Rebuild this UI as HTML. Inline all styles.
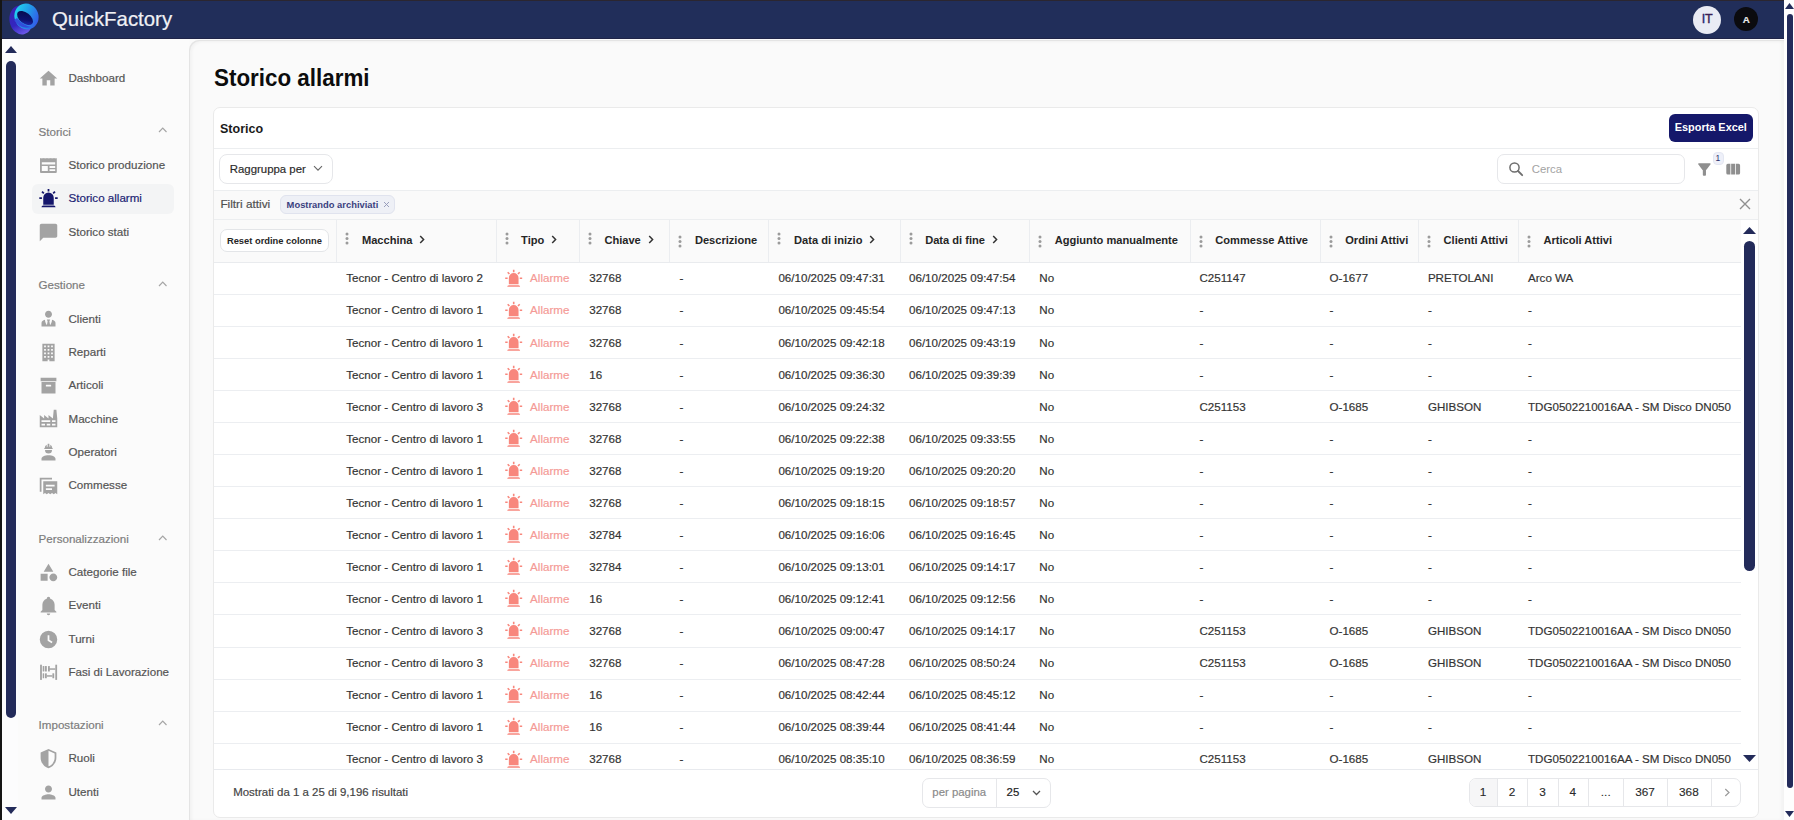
<!DOCTYPE html>
<html><head><meta charset="utf-8"><title>Storico allarmi</title>
<style>
html,body{margin:0;padding:0;width:1794px;height:820px;overflow:hidden;background:#fafafa;}
body{position:relative;font-family:"Liberation Sans",sans-serif;}
.t{position:absolute;white-space:nowrap;}
.r{position:absolute;}
.m{-webkit-text-stroke:0.2px;}
.m1{-webkit-text-stroke:0.18px;}
svg.r{display:block;}
</style></head><body>

<div class="r" style="left:0px;top:0px;width:1794px;height:820px;background:#fafafa"></div>
<div class="r" style="left:1784px;top:0px;width:10px;height:820px;background:#fefefe"></div>
<div class="r" style="left:1787px;top:14px;width:6px;height:774px;background:#232b5a;border-radius:3px"></div>
<svg class="r" style="left:1785px;top:3px;" width="9" height="6" viewBox="0 0 9 6"><path d="M0 6 L4.5 0 L9 6 Z" fill="#232b5a"/></svg>
<svg class="r" style="left:1785px;top:811px;" width="9" height="6" viewBox="0 0 9 6"><path d="M0 0 L4.5 6 L9 0 Z" fill="#232b5a"/></svg>
<div class="r" style="left:0px;top:0px;width:1784px;height:39px;background:#212e5a"></div>
<div class="r" style="left:0px;top:0px;width:1784px;height:1px;background:#2b2630"></div>
<div class="r" style="left:0px;top:38px;width:1784px;height:1px;background:#1f2448"></div>
<div class="r" style="left:0px;top:0px;width:2px;height:820px;background:#151515"></div>
<svg class="r" style="left:0px;top:0px" width="44" height="38" viewBox="0 0 44 38">
<defs>
<linearGradient id="lgp" x1="0.3" y1="0" x2="0.5" y2="1"><stop offset="0" stop-color="#3a22b0"/><stop offset="0.6" stop-color="#3325c0"/><stop offset="1" stop-color="#6b58ea"/></linearGradient>
<linearGradient id="lgc" x1="0.1" y1="0.1" x2="0.9" y2="0.9"><stop offset="0" stop-color="#21d8f0"/><stop offset="0.5" stop-color="#229ae8"/><stop offset="1" stop-color="#3552e8"/></linearGradient>
<linearGradient id="lgd" x1="0" y1="0" x2="1" y2="1"><stop offset="0" stop-color="#050a45"/><stop offset="0.6" stop-color="#0c1270"/><stop offset="1" stop-color="#2a2ec8"/></linearGradient>
</defs>
<ellipse cx="21" cy="20" rx="11.5" ry="14.5" transform="rotate(-12 21 20)" fill="url(#lgp)"/>
<ellipse cx="26.5" cy="16.5" rx="12" ry="13" transform="rotate(-20 26.5 16.5)" fill="url(#lgc)"/>
<ellipse cx="25" cy="18" rx="9.2" ry="5.4" transform="rotate(38 25 18)" fill="url(#lgd)"/>
<path d="M14 20 Q20 30 31 27 Q24 26 17 18 Z" fill="#3440d8" opacity="0.85"/>
</svg>
<div class="t " style="left:52.00px;top:8.83px;font-size:20.4px;line-height:20.4px;color:#f0f1f5;-webkit-text-stroke:0.2px #f0f1f5">QuickFactory</div>
<div class="r" style="left:1693px;top:6px;width:28px;height:28px;background:#e9ebf4;border-radius:50%"></div>
<div class="t" style="left:1693px;top:11.4px;width:28px;text-align:center;font-size:12.5px;line-height:16px;letter-spacing:-0.3px;-webkit-text-stroke:0.4px"><span style="color:#1f2470">I</span><span style="color:#3a1f55">T</span></div>
<div class="r" style="left:1734px;top:7px;width:24px;height:24px;background:#0b0b0f;border-radius:50%"></div>
<div class="t" style="left:1734px;top:13px;width:24.5px;text-align:center;font-size:9.8px;line-height:14px;font-weight:700;color:#ececec;-webkit-text-stroke:0.2px">A</div>
<div class="r" style="left:2px;top:39px;width:187px;height:781px;background:#fbfbfb"></div>
<div class="r" style="left:2px;top:39px;width:16px;height:781px;background:#fcfcfd"></div>
<svg class="r" style="left:5px;top:46px;" width="12" height="7" viewBox="0 0 12 7"><path d="M0 7 L6 0 L12 7 Z" fill="#232b5a"/></svg>
<div class="r" style="left:6px;top:61px;width:10px;height:657px;background:#232b5a;border-radius:5px"></div>
<svg class="r" style="left:5px;top:807px;" width="12" height="7" viewBox="0 0 12 7"><path d="M0 0 L6 7 L12 0 Z" fill="#232b5a"/></svg>
<svg class="r" style="left:38.1px;top:68.2px;" width="21" height="21" viewBox="0 0 24 24"><g fill="#a3a3a3"><path d="M10 20v-6h4v6h5v-8h3L12 3 2 12h3v8z"/></g></svg>
<div class="t m" style="left:68.50px;top:72.38px;font-size:11.6px;line-height:11.6px;color:#555555;">Dashboard</div>
<div class="t m" style="left:38.60px;top:125.78px;font-size:11.6px;line-height:11.6px;color:#7d7d7d;">Storici</div>
<svg class="r" style="left:157.5px;top:127.39999999999999px;" width="9.5" height="6" viewBox="0 0 9.5 6"><path d="M1 5 L4.75 1.2 L8.5 5" fill="none" stroke="#a5a5a5" stroke-width="1.2"/></svg>
<div class="r" style="left:32px;top:184px;width:142px;height:30px;background:#f3f4f5;border-radius:6px"></div>
<div class="t m" style="left:38.60px;top:279.08px;font-size:11.6px;line-height:11.6px;color:#7d7d7d;">Gestione</div>
<svg class="r" style="left:157.5px;top:280.7px;" width="9.5" height="6" viewBox="0 0 9.5 6"><path d="M1 5 L4.75 1.2 L8.5 5" fill="none" stroke="#a5a5a5" stroke-width="1.2"/></svg>
<div class="t m" style="left:38.60px;top:532.98px;font-size:11.6px;line-height:11.6px;color:#7d7d7d;">Personalizzazioni</div>
<svg class="r" style="left:157.5px;top:534.5999999999999px;" width="9.5" height="6" viewBox="0 0 9.5 6"><path d="M1 5 L4.75 1.2 L8.5 5" fill="none" stroke="#a5a5a5" stroke-width="1.2"/></svg>
<div class="t m" style="left:38.60px;top:718.68px;font-size:11.6px;line-height:11.6px;color:#7d7d7d;">Impostazioni</div>
<svg class="r" style="left:157.5px;top:720.3px;" width="9.5" height="6" viewBox="0 0 9.5 6"><path d="M1 5 L4.75 1.2 L8.5 5" fill="none" stroke="#a5a5a5" stroke-width="1.2"/></svg>
<svg class="r" style="left:40px;top:157.8px;" width="17.2" height="15" viewBox="0 0 17.2 15"><path fill="#a3a3a3" fill-rule="evenodd" d="M0 0.6l0.7-0.6 0.7 0.6 0.7-0.6 0.7 0.6 0.7-0.6 0.7 0.6 0.7-0.6 0.7 0.6 0.7-0.6 0.7 0.6 0.7-0.6 0.7 0.6 0.7-0.6 0.7 0.6 0.7-0.6 0.7 0.6 0.7-0.6 0.7 0.6 0.7-0.6 0.7 0.6 0.7-0.6 0.7 0.6 0.7-0.6 0.7 0.6V14a1 1 0 0 1-1 1H1a1 1 0 0 1-1-1zM1.8 4.2v2.2h13.4V4.2zm0 3.8v5h6v-5zm7.7 0v2h5.7v-2zm0 3.3v1.7h5.7v-1.7z"/></svg>
<div class="t m" style="left:68.50px;top:158.98px;font-size:11.6px;line-height:11.6px;color:#555555;">Storico produzione</div>
<svg class="r" style="left:38.1px;top:188.3px;" width="21" height="21" viewBox="0 0 24 24"><g fill="#15166b"><path d="M6,6.9L3.87,4.78L5.28,3.37L7.4,5.5L6,6.9M13,1V4H11V1H13M20.13,4.78L18,6.9L16.6,5.5L18.72,3.37L20.13,4.78M4.5,10.5V12.5H1.5V10.5H4.5M19.5,10.5H22.5V12.5H19.5V10.5M6,20H18A2,2 0 0,1 20,22H4A2,2 0 0,1 6,20M12,5A6,6 0 0,1 18,11V19H6V11A6,6 0 0,1 12,5Z"/></g></svg>
<div class="t m" style="left:68.50px;top:192.48px;font-size:11.6px;line-height:11.6px;color:#1c1f74;">Storico allarmi</div>
<svg class="r" style="left:38.1px;top:221.5px;" width="21" height="21" viewBox="0 0 24 24"><g fill="#a3a3a3"><path d="M20 2H4c-1.1 0-1.99.9-1.99 2L2 22l4-4h14c1.1 0 2-.9 2-2V4c0-1.1-.9-2-2-2z"/></g></svg>
<div class="t m" style="left:68.50px;top:225.68px;font-size:11.6px;line-height:11.6px;color:#555555;">Storico stati</div>
<svg class="r" style="left:38.1px;top:308.4px;" width="21" height="21" viewBox="0 0 24 24"><g fill="#a3a3a3"><path d="M12 3C14.21 3 16 4.79 16 7S14.21 11 12 11 8 9.21 8 7 9.79 3 12 3M16 13.54C16 14.6 15.72 17.07 13.81 19.83L13 15L13.94 13.12C13.32 13.05 12.67 13 12 13S10.68 13.05 10.06 13.12L11 15L10.19 19.83C8.28 17.07 8 14.6 8 13.54C5.61 14.24 4 15.5 4 17V21H20V17C20 15.5 18.4 14.24 16 13.54Z"/></g></svg>
<div class="t m" style="left:68.50px;top:312.58px;font-size:11.6px;line-height:11.6px;color:#555555;">Clienti</div>
<svg class="r" style="left:38.1px;top:341.9px;" width="21" height="21" viewBox="0 0 24 24"><g fill="#a3a3a3"><path fill-rule="evenodd" d="M5 2h14v20H5zM7 4v2h2V4zm4 0v2h2V4zm4 0v2h2V4zM7 8v2h2V8zm4 0v2h2V8zm4 0v2h2V8zM7 12v2h2v-2zm4 0v2h2v-2zm4 0v2h2v-2zM7 16v2h2v-2zm4 0v2h2v-2zm4 0v2h2v-2zM11 20v2h2v-2z"/></g></svg>
<div class="t m" style="left:68.50px;top:346.08px;font-size:11.6px;line-height:11.6px;color:#555555;">Reparti</div>
<svg class="r" style="left:38.1px;top:375.0px;" width="21" height="21" viewBox="0 0 24 24"><g fill="#a3a3a3"><path d="M3,3H21V7H3V3M4,8H20V21H4V8M9.5,11A0.5,0.5 0 0,0 9,11.5V13H15V11.5A0.5,0.5 0 0,0 14.5,11H9.5Z"/></g></svg>
<div class="t m" style="left:68.50px;top:379.18px;font-size:11.6px;line-height:11.6px;color:#555555;">Articoli</div>
<svg class="r" style="left:38.1px;top:408.4px;" width="21" height="21" viewBox="0 0 24 24"><g fill="#a3a3a3"><path d="M4,18V20H8V18H4M4,14V16H14V14H4M10,18V20H14V18H10M16,14V16H20V14H16M16,18V20H20V18H16M2,22V8L7,12V8L12,12V8L17,12L18,2H21L22,12V22H2Z"/></g></svg>
<div class="t m" style="left:68.50px;top:412.58px;font-size:11.6px;line-height:11.6px;color:#555555;">Macchine</div>
<svg class="r" style="left:38.1px;top:441.8px;" width="21" height="21" viewBox="0 0 24 24"><g fill="#a3a3a3"><path d="M12,15C7.58,15 4,16.79 4,19V21H20V19C20,16.79 16.42,15 12,15M8,9A4,4 0 0,0 12,13A4,4 0 0,0 16,9M11.5,2C11.2,2 11,2.21 11,2.5V5.5H10V3C10,3 7.75,3.86 7.75,6.75C7.75,6.75 7,6.89 7,8H17C16.95,6.89 16.25,6.75 16.25,6.75C16.25,3.86 14,3 14,3V5.5H13V2.5C13,2.21 12.81,2 12.5,2H11.5Z"/></g></svg>
<div class="t m" style="left:68.50px;top:445.98px;font-size:11.6px;line-height:11.6px;color:#555555;">Operatori</div>
<svg class="r" style="left:38.1px;top:475.3px;" width="21" height="21" viewBox="0 0 24 24"><g fill="#a3a3a3"><path fill-rule="evenodd" d="M2 3h14v2H4v14H2zM6 7h16v15l-2-1.5-2 1.5-2-1.5-2 1.5-2-1.5-2 1.5-2-1.5-2 1.5zm3 4v2h10v-2zm0 4v2h7v-2z"/></g></svg>
<div class="t m" style="left:68.50px;top:479.48px;font-size:11.6px;line-height:11.6px;color:#555555;">Commesse</div>
<svg class="r" style="left:38.1px;top:562.0px;" width="21" height="21" viewBox="0 0 24 24"><g fill="#a3a3a3"><path d="M11,13.5V21.5H3V13.5H11M12,2L17.5,11H6.5L12,2M17.5,13C20,13 22,15 22,17.5C22,20 20,22 17.5,22C15,22 13,20 13,17.5C13,15 15,13 17.5,13Z"/></g></svg>
<div class="t m" style="left:68.50px;top:566.18px;font-size:11.6px;line-height:11.6px;color:#555555;">Categorie file</div>
<svg class="r" style="left:38.1px;top:595.3px;" width="21" height="21" viewBox="0 0 24 24"><g fill="#a3a3a3"><path d="M21,19V20H3V19L5,17V11C5,7.9 7.03,5.17 10,4.29C10,4.19 10,4.1 10,4A2,2 0 0,1 12,2A2,2 0 0,1 14,4C14,4.1 14,4.19 14,4.29C16.97,5.17 19,7.9 19,11V17L21,19M14,21A2,2 0 0,1 12,23A2,2 0 0,1 10,21"/></g></svg>
<div class="t m" style="left:68.50px;top:599.48px;font-size:11.6px;line-height:11.6px;color:#555555;">Eventi</div>
<svg class="r" style="left:38.1px;top:628.8px;" width="21" height="21" viewBox="0 0 24 24"><g fill="#a3a3a3"><path fill-rule="evenodd" d="M12 2a10 10 0 1 0 0 20 10 10 0 0 0 0-20zm-1 5h2v5.4l3.6 2.1-1 1.7L11 13.5z"/></g></svg>
<div class="t m" style="left:68.50px;top:632.98px;font-size:11.6px;line-height:11.6px;color:#555555;">Turni</div>
<svg class="r" style="left:36px;top:660.0px;" width="26" height="24" viewBox="0 0 26 24"><g fill="#a3a3a3"><rect x="4.1" y="4.7" width="1.8" height="15.2"/><rect x="19.3" y="4.7" width="1.8" height="15.2"/><rect x="6.7" y="5.9" width="1.5" height="5.5" rx="0.5"/><rect x="8.8" y="5.9" width="2.0" height="5.5" rx="0.5"/><rect x="12" y="5.9" width="1.8" height="5.5" rx="0.5"/><rect x="12" y="8.3" width="7.3" height="1.5"/><rect x="6.7" y="13.2" width="1.5" height="5" rx="0.5"/><rect x="9.0" y="13.2" width="1.8" height="5" rx="0.5"/><rect x="16.4" y="13.2" width="1.8" height="5" rx="0.5"/><rect x="10.8" y="15.2" width="5.6" height="1.5"/></g></svg>
<div class="t m" style="left:68.50px;top:666.48px;font-size:11.6px;line-height:11.6px;color:#555555;">Fasi di Lavorazione</div>
<svg class="r" style="left:38.1px;top:748.2px;" width="21" height="21" viewBox="0 0 24 24"><g fill="#a3a3a3"><path d="M12,1L3,5V11C3,16.55 6.84,21.74 12,23C17.16,21.74 21,16.55 21,11V5L12,1M12,3.18L19,6.3V11.22C19,15.6 16,19.8 12,20.9V3.18Z"/></g></svg>
<div class="t m" style="left:68.50px;top:752.38px;font-size:11.6px;line-height:11.6px;color:#555555;">Ruoli</div>
<svg class="r" style="left:38.1px;top:781.9px;" width="21" height="21" viewBox="0 0 24 24"><g fill="#a3a3a3"><path d="M12 12c2.21 0 4-1.79 4-4s-1.79-4-4-4-4 1.79-4 4 1.79 4 4 4zm0 2c-2.67 0-8 1.34-8 4v2h16v-2c0-2.66-5.33-4-8-4z"/></g></svg>
<div class="t m" style="left:68.50px;top:786.08px;font-size:11.6px;line-height:11.6px;color:#555555;">Utenti</div>
<div class="r" style="left:189px;top:40px;width:1595px;height:780px;background:#fafafa;border-top-left-radius:10px;box-shadow:inset 1px 1px 0 #e4e4e4, inset 3px 2px 3px rgba(0,0,0,0.035), inset -3px 0 3px rgba(0,0,0,0.03)"></div>
<div class="t " style="left:214.00px;top:68.24px;font-size:22.4px;line-height:22.4px;color:#0c0c0c;font-weight:700;transform:scaleY(1.09);transform-origin:0 19px">Storico allarmi</div>
<div class="r" style="left:213px;top:107px;width:1546px;height:711px;background:#ffffff;border:1px solid #eaeaea;border-radius:7px;box-sizing:border-box"></div>
<div class="t " style="left:220.00px;top:123.42px;font-size:12.5px;line-height:12.5px;color:#1a1a1a;font-weight:700;">Storico</div>
<div class="r" style="left:1669px;top:114px;width:84px;height:28px;background:#15186a;border-radius:6px"></div>
<div class="t " style="left:1674.80px;top:121.97px;font-size:10.9px;line-height:10.9px;color:#ffffff;font-weight:700;">Esporta Excel</div>
<div class="r" style="left:214px;top:148px;width:1544px;height:1px;background:#eceef0"></div>
<div class="r" style="left:219px;top:154px;width:114px;height:30px;background:#fff;border:1px solid #e6e7ea;border-radius:8px;box-sizing:border-box"></div>
<div class="t m1" style="left:229.80px;top:164.15px;font-size:11.4px;line-height:11.4px;color:#2b2b2b;">Raggruppa per</div>
<svg class="r" style="left:313px;top:165px;" width="10" height="7" viewBox="0 0 10 7"><path d="M1 1.2 L5 5.2 L9 1.2" fill="none" stroke="#666" stroke-width="1.1"/></svg>
<div class="r" style="left:1497px;top:154px;width:188px;height:30px;background:#fff;border:1px solid #e6e7ea;border-radius:7px;box-sizing:border-box"></div>
<svg class="r" style="left:1508px;top:161px;" width="16" height="16" viewBox="0 0 16 16"><circle cx="6.5" cy="6.5" r="4.6" fill="none" stroke="#6e6e6e" stroke-width="1.5"/><path d="M10 10 L14.2 14.2" stroke="#6e6e6e" stroke-width="1.8" stroke-linecap="round"/></svg>
<div class="t " style="left:1531.70px;top:163.75px;font-size:11.4px;line-height:11.4px;color:#a3a3a3;">Cerca</div>
<svg class="r" style="left:1695.4px;top:159.6px;" width="18.8" height="18.8" viewBox="0 0 24 24"><path fill="#8f8f8f" d="M4.25 5.61C6.27 8.2 10 13 10 13v6c0 .55.45 1 1 1h2c.55 0 1-.45 1-1v-6s3.72-4.8 5.74-7.39c.51-.66.04-1.61-.79-1.61H5.04c-.83 0-1.3.95-.79 1.61z"/></svg>
<div class="r" style="left:1712.5px;top:151.7px;width:11px;height:13px;background:#eef0f9;border:1px solid #e4e7f2;border-radius:4px;box-sizing:border-box"></div>
<div class="t " style="left:1715.60px;top:154.40px;font-size:8.5px;line-height:8.5px;color:#2a2f6a;">1</div>
<svg class="r" style="left:1723.7px;top:160.1px;" width="18.4" height="18.4" viewBox="0 0 24 24"><path fill="#8f8f8f" d="M14.67 5v14H9.33V5h5.34zm1 14H19a2 2 0 0 0 2-2V7a2 2 0 0 0-2-2h-3.33v14zm-7.34 0V5H5a2 2 0 0 0-2 2v10a2 2 0 0 0 2 2h3.33z"/></svg>
<div class="r" style="left:214px;top:190px;width:1544px;height:1px;background:#eceef0"></div>
<div class="r" style="left:214px;top:191px;width:1544px;height:29px;background:#fafafa"></div>
<div class="t m" style="left:220.40px;top:198.61px;font-size:11.8px;line-height:11.8px;color:#505050;">Filtri attivi</div>
<div class="r" style="left:280px;top:195px;width:115px;height:19px;background:#eef0f6;border:1px solid #e0e3ee;border-radius:6px;box-sizing:border-box"></div>
<div class="t " style="left:286.60px;top:200.24px;font-size:9.4px;line-height:9.4px;color:#3a3f7e;font-weight:700;">Mostrando archiviati</div>
<svg class="r" style="left:383px;top:201px;" width="7" height="7" viewBox="0 0 7 7"><path d="M1 1 L6 6 M6 1 L1 6" stroke="#9095b5" stroke-width="0.9"/></svg>
<svg class="r" style="left:1739px;top:198px;" width="12" height="12" viewBox="0 0 12 12"><path d="M1 1 L11 11 M11 1 L1 11" stroke="#909090" stroke-width="1.4"/></svg>
<div class="r" style="left:214px;top:219px;width:1544px;height:1px;background:#eceef0"></div>
<div class="r" style="left:1741px;top:220px;width:17px;height:553px;background:#ffffff"></div>
<svg class="r" style="left:1743px;top:227px;" width="13" height="7" viewBox="0 0 13 7"><path d="M0 7 L6.5 0 L13 7 Z" fill="#232b5a"/></svg>
<div class="r" style="left:1744px;top:241px;width:11px;height:330px;background:#232b5a;border-radius:5.5px"></div>
<svg class="r" style="left:1743px;top:755px;" width="13" height="7" viewBox="0 0 13 7"><path d="M0 0 L6.5 7 L13 0 Z" fill="#232b5a"/></svg>
<div class="r" style="left:214px;top:220px;width:1527px;height:42px;background:#fafafa"></div>
<div class="r" style="left:214px;top:261.5px;width:1527px;height:1px;background:#e9ebee"></div>
<div class="r" style="left:336px;top:220px;width:1px;height:42px;background:#ebedf0"></div>
<div class="r" style="left:496px;top:220px;width:1px;height:42px;background:#ebedf0"></div>
<div class="r" style="left:579px;top:220px;width:1px;height:42px;background:#ebedf0"></div>
<div class="r" style="left:669px;top:220px;width:1px;height:42px;background:#ebedf0"></div>
<div class="r" style="left:768px;top:220px;width:1px;height:42px;background:#ebedf0"></div>
<div class="r" style="left:900px;top:220px;width:1px;height:42px;background:#ebedf0"></div>
<div class="r" style="left:1029px;top:220px;width:1px;height:42px;background:#ebedf0"></div>
<div class="r" style="left:1190px;top:220px;width:1px;height:42px;background:#ebedf0"></div>
<div class="r" style="left:1320px;top:220px;width:1px;height:42px;background:#ebedf0"></div>
<div class="r" style="left:1418px;top:220px;width:1px;height:42px;background:#ebedf0"></div>
<div class="r" style="left:1518px;top:220px;width:1px;height:42px;background:#ebedf0"></div>
<div class="r" style="left:220px;top:229px;width:109px;height:23px;background:#fff;border:1px solid #e3e5e8;border-radius:7px;box-sizing:border-box"></div>
<div class="t " style="left:226.90px;top:236.69px;font-size:9.35px;line-height:9.35px;color:#262626;font-weight:700;">Reset ordine colonne</div>
<svg class="r" style="left:345px;top:231.6px;" width="4" height="13" viewBox="0 0 4 13"><circle cx="2" cy="2" r="1.5" fill="#9b9b9b"/><circle cx="2" cy="6.5" r="1.5" fill="#9b9b9b"/><circle cx="2" cy="11" r="1.5" fill="#9b9b9b"/></svg>
<div class="t " style="left:361.90px;top:234.90px;font-size:11.1px;line-height:11.1px;color:#262626;font-weight:700;">Macchina</div>
<svg class="r" style="left:419px;top:235px;" width="6" height="9" viewBox="0 0 6 9"><path d="M1.2 1 L4.6 4.5 L1.2 8" fill="none" stroke="#333" stroke-width="1.5"/></svg>
<svg class="r" style="left:505px;top:231.6px;" width="4" height="13" viewBox="0 0 4 13"><circle cx="2" cy="2" r="1.5" fill="#9b9b9b"/><circle cx="2" cy="6.5" r="1.5" fill="#9b9b9b"/><circle cx="2" cy="11" r="1.5" fill="#9b9b9b"/></svg>
<div class="t " style="left:521.10px;top:234.90px;font-size:11.1px;line-height:11.1px;color:#262626;font-weight:700;">Tipo</div>
<svg class="r" style="left:551px;top:235px;" width="6" height="9" viewBox="0 0 6 9"><path d="M1.2 1 L4.6 4.5 L1.2 8" fill="none" stroke="#333" stroke-width="1.5"/></svg>
<svg class="r" style="left:588px;top:231.6px;" width="4" height="13" viewBox="0 0 4 13"><circle cx="2" cy="2" r="1.5" fill="#9b9b9b"/><circle cx="2" cy="6.5" r="1.5" fill="#9b9b9b"/><circle cx="2" cy="11" r="1.5" fill="#9b9b9b"/></svg>
<div class="t " style="left:604.40px;top:234.90px;font-size:11.1px;line-height:11.1px;color:#262626;font-weight:700;">Chiave</div>
<svg class="r" style="left:648px;top:235px;" width="6" height="9" viewBox="0 0 6 9"><path d="M1.2 1 L4.6 4.5 L1.2 8" fill="none" stroke="#333" stroke-width="1.5"/></svg>
<svg class="r" style="left:678px;top:234.6px;" width="4" height="13" viewBox="0 0 4 13"><circle cx="2" cy="2" r="1.5" fill="#9b9b9b"/><circle cx="2" cy="6.5" r="1.5" fill="#9b9b9b"/><circle cx="2" cy="11" r="1.5" fill="#9b9b9b"/></svg>
<div class="t " style="left:694.90px;top:234.90px;font-size:11.1px;line-height:11.1px;color:#262626;font-weight:700;">Descrizione</div>
<svg class="r" style="left:777px;top:231.6px;" width="4" height="13" viewBox="0 0 4 13"><circle cx="2" cy="2" r="1.5" fill="#9b9b9b"/><circle cx="2" cy="6.5" r="1.5" fill="#9b9b9b"/><circle cx="2" cy="11" r="1.5" fill="#9b9b9b"/></svg>
<div class="t " style="left:794.00px;top:234.90px;font-size:11.1px;line-height:11.1px;color:#262626;font-weight:700;">Data di inizio</div>
<svg class="r" style="left:869px;top:235px;" width="6" height="9" viewBox="0 0 6 9"><path d="M1.2 1 L4.6 4.5 L1.2 8" fill="none" stroke="#333" stroke-width="1.5"/></svg>
<svg class="r" style="left:909px;top:231.6px;" width="4" height="13" viewBox="0 0 4 13"><circle cx="2" cy="2" r="1.5" fill="#9b9b9b"/><circle cx="2" cy="6.5" r="1.5" fill="#9b9b9b"/><circle cx="2" cy="11" r="1.5" fill="#9b9b9b"/></svg>
<div class="t " style="left:925.20px;top:234.90px;font-size:11.1px;line-height:11.1px;color:#262626;font-weight:700;">Data di fine</div>
<svg class="r" style="left:992px;top:235px;" width="6" height="9" viewBox="0 0 6 9"><path d="M1.2 1 L4.6 4.5 L1.2 8" fill="none" stroke="#333" stroke-width="1.5"/></svg>
<svg class="r" style="left:1038px;top:234.6px;" width="4" height="13" viewBox="0 0 4 13"><circle cx="2" cy="2" r="1.5" fill="#9b9b9b"/><circle cx="2" cy="6.5" r="1.5" fill="#9b9b9b"/><circle cx="2" cy="11" r="1.5" fill="#9b9b9b"/></svg>
<div class="t " style="left:1054.70px;top:234.90px;font-size:11.1px;line-height:11.1px;color:#262626;font-weight:700;">Aggiunto manualmente</div>
<svg class="r" style="left:1199px;top:234.6px;" width="4" height="13" viewBox="0 0 4 13"><circle cx="2" cy="2" r="1.5" fill="#9b9b9b"/><circle cx="2" cy="6.5" r="1.5" fill="#9b9b9b"/><circle cx="2" cy="11" r="1.5" fill="#9b9b9b"/></svg>
<div class="t " style="left:1215.30px;top:234.90px;font-size:11.1px;line-height:11.1px;color:#262626;font-weight:700;">Commesse Attive</div>
<svg class="r" style="left:1329px;top:234.6px;" width="4" height="13" viewBox="0 0 4 13"><circle cx="2" cy="2" r="1.5" fill="#9b9b9b"/><circle cx="2" cy="6.5" r="1.5" fill="#9b9b9b"/><circle cx="2" cy="11" r="1.5" fill="#9b9b9b"/></svg>
<div class="t " style="left:1345.20px;top:234.90px;font-size:11.1px;line-height:11.1px;color:#262626;font-weight:700;">Ordini Attivi</div>
<svg class="r" style="left:1427px;top:234.6px;" width="4" height="13" viewBox="0 0 4 13"><circle cx="2" cy="2" r="1.5" fill="#9b9b9b"/><circle cx="2" cy="6.5" r="1.5" fill="#9b9b9b"/><circle cx="2" cy="11" r="1.5" fill="#9b9b9b"/></svg>
<div class="t " style="left:1443.60px;top:234.90px;font-size:11.1px;line-height:11.1px;color:#262626;font-weight:700;">Clienti Attivi</div>
<svg class="r" style="left:1527px;top:234.6px;" width="4" height="13" viewBox="0 0 4 13"><circle cx="2" cy="2" r="1.5" fill="#9b9b9b"/><circle cx="2" cy="6.5" r="1.5" fill="#9b9b9b"/><circle cx="2" cy="11" r="1.5" fill="#9b9b9b"/></svg>
<div class="t " style="left:1543.40px;top:234.90px;font-size:11.1px;line-height:11.1px;color:#262626;font-weight:700;">Articoli Attivi</div>
<div class="r" style="left:214px;top:262px;width:1527px;height:507px;overflow:hidden">
<div class="r" style="left:0;top:32.13px;width:1527px;height:1px;background:#eceef1"></div>
<div class="t m1" style="left:132.30px;top:10.43px;font-size:11.6px;line-height:11.6px;color:#333333">Tecnor - Centro di lavoro 2</div>
<svg class="r" style="left:290.20px;top:7.00px" width="19.4" height="19.4" viewBox="0 0 24 24"><g fill="#f8877d"><path d="M6,6.9L3.87,4.78L5.28,3.37L7.4,5.5L6,6.9M13,1V4H11V1H13M20.13,4.78L18,6.9L16.6,5.5L18.72,3.37L20.13,4.78M4.5,10.5V12.5H1.5V10.5H4.5M19.5,10.5H22.5V12.5H19.5V10.5M6,20H18A2,2 0 0,1 20,22H4A2,2 0 0,1 6,20M12,5A6,6 0 0,1 18,11V19H6V11A6,6 0 0,1 12,5Z"/></g></svg>
<div class="t m1" style="left:316.10px;top:10.43px;font-size:11.6px;line-height:11.6px;color:#f59a96">Allarme</div>
<div class="t m1" style="left:375.20px;top:10.43px;font-size:11.6px;line-height:11.6px;color:#333333">32768</div>
<div class="t m1" style="left:465.60px;top:10.43px;font-size:11.6px;line-height:11.6px;color:#333333">-</div>
<div class="t m1" style="left:564.40px;top:10.43px;font-size:11.6px;line-height:11.6px;color:#333333">06/10/2025 09:47:31</div>
<div class="t m1" style="left:695.00px;top:10.43px;font-size:11.6px;line-height:11.6px;color:#333333">06/10/2025 09:47:54</div>
<div class="t m1" style="left:825.30px;top:10.43px;font-size:11.6px;line-height:11.6px;color:#333333">No</div>
<div class="t m1" style="left:985.50px;top:10.43px;font-size:11.6px;line-height:11.6px;color:#333333">C251147</div>
<div class="t m1" style="left:1115.50px;top:10.43px;font-size:11.6px;line-height:11.6px;color:#333333">O-1677</div>
<div class="t m1" style="left:1213.90px;top:10.43px;font-size:11.6px;line-height:11.6px;color:#333333">PRETOLANI</div>
<div class="t m1" style="left:1314.00px;top:10.43px;font-size:11.6px;line-height:11.6px;color:#333333">Arco WA</div>
<div class="r" style="left:0;top:64.17px;width:1527px;height:1px;background:#eceef1"></div>
<div class="t m1" style="left:132.30px;top:42.47px;font-size:11.6px;line-height:11.6px;color:#333333">Tecnor - Centro di lavoro 1</div>
<svg class="r" style="left:290.20px;top:39.03px" width="19.4" height="19.4" viewBox="0 0 24 24"><g fill="#f8877d"><path d="M6,6.9L3.87,4.78L5.28,3.37L7.4,5.5L6,6.9M13,1V4H11V1H13M20.13,4.78L18,6.9L16.6,5.5L18.72,3.37L20.13,4.78M4.5,10.5V12.5H1.5V10.5H4.5M19.5,10.5H22.5V12.5H19.5V10.5M6,20H18A2,2 0 0,1 20,22H4A2,2 0 0,1 6,20M12,5A6,6 0 0,1 18,11V19H6V11A6,6 0 0,1 12,5Z"/></g></svg>
<div class="t m1" style="left:316.10px;top:42.47px;font-size:11.6px;line-height:11.6px;color:#f59a96">Allarme</div>
<div class="t m1" style="left:375.20px;top:42.47px;font-size:11.6px;line-height:11.6px;color:#333333">32768</div>
<div class="t m1" style="left:465.60px;top:42.47px;font-size:11.6px;line-height:11.6px;color:#333333">-</div>
<div class="t m1" style="left:564.40px;top:42.47px;font-size:11.6px;line-height:11.6px;color:#333333">06/10/2025 09:45:54</div>
<div class="t m1" style="left:695.00px;top:42.47px;font-size:11.6px;line-height:11.6px;color:#333333">06/10/2025 09:47:13</div>
<div class="t m1" style="left:825.30px;top:42.47px;font-size:11.6px;line-height:11.6px;color:#333333">No</div>
<div class="t m1" style="left:985.50px;top:42.47px;font-size:11.6px;line-height:11.6px;color:#333333">-</div>
<div class="t m1" style="left:1115.50px;top:42.47px;font-size:11.6px;line-height:11.6px;color:#333333">-</div>
<div class="t m1" style="left:1213.90px;top:42.47px;font-size:11.6px;line-height:11.6px;color:#333333">-</div>
<div class="t m1" style="left:1314.00px;top:42.47px;font-size:11.6px;line-height:11.6px;color:#333333">-</div>
<div class="r" style="left:0;top:96.20px;width:1527px;height:1px;background:#eceef1"></div>
<div class="t m1" style="left:132.30px;top:74.50px;font-size:11.6px;line-height:11.6px;color:#333333">Tecnor - Centro di lavoro 1</div>
<svg class="r" style="left:290.20px;top:71.07px" width="19.4" height="19.4" viewBox="0 0 24 24"><g fill="#f8877d"><path d="M6,6.9L3.87,4.78L5.28,3.37L7.4,5.5L6,6.9M13,1V4H11V1H13M20.13,4.78L18,6.9L16.6,5.5L18.72,3.37L20.13,4.78M4.5,10.5V12.5H1.5V10.5H4.5M19.5,10.5H22.5V12.5H19.5V10.5M6,20H18A2,2 0 0,1 20,22H4A2,2 0 0,1 6,20M12,5A6,6 0 0,1 18,11V19H6V11A6,6 0 0,1 12,5Z"/></g></svg>
<div class="t m1" style="left:316.10px;top:74.50px;font-size:11.6px;line-height:11.6px;color:#f59a96">Allarme</div>
<div class="t m1" style="left:375.20px;top:74.50px;font-size:11.6px;line-height:11.6px;color:#333333">32768</div>
<div class="t m1" style="left:465.60px;top:74.50px;font-size:11.6px;line-height:11.6px;color:#333333">-</div>
<div class="t m1" style="left:564.40px;top:74.50px;font-size:11.6px;line-height:11.6px;color:#333333">06/10/2025 09:42:18</div>
<div class="t m1" style="left:695.00px;top:74.50px;font-size:11.6px;line-height:11.6px;color:#333333">06/10/2025 09:43:19</div>
<div class="t m1" style="left:825.30px;top:74.50px;font-size:11.6px;line-height:11.6px;color:#333333">No</div>
<div class="t m1" style="left:985.50px;top:74.50px;font-size:11.6px;line-height:11.6px;color:#333333">-</div>
<div class="t m1" style="left:1115.50px;top:74.50px;font-size:11.6px;line-height:11.6px;color:#333333">-</div>
<div class="t m1" style="left:1213.90px;top:74.50px;font-size:11.6px;line-height:11.6px;color:#333333">-</div>
<div class="t m1" style="left:1314.00px;top:74.50px;font-size:11.6px;line-height:11.6px;color:#333333">-</div>
<div class="r" style="left:0;top:128.24px;width:1527px;height:1px;background:#eceef1"></div>
<div class="t m1" style="left:132.30px;top:106.54px;font-size:11.6px;line-height:11.6px;color:#333333">Tecnor - Centro di lavoro 1</div>
<svg class="r" style="left:290.20px;top:103.10px" width="19.4" height="19.4" viewBox="0 0 24 24"><g fill="#f8877d"><path d="M6,6.9L3.87,4.78L5.28,3.37L7.4,5.5L6,6.9M13,1V4H11V1H13M20.13,4.78L18,6.9L16.6,5.5L18.72,3.37L20.13,4.78M4.5,10.5V12.5H1.5V10.5H4.5M19.5,10.5H22.5V12.5H19.5V10.5M6,20H18A2,2 0 0,1 20,22H4A2,2 0 0,1 6,20M12,5A6,6 0 0,1 18,11V19H6V11A6,6 0 0,1 12,5Z"/></g></svg>
<div class="t m1" style="left:316.10px;top:106.54px;font-size:11.6px;line-height:11.6px;color:#f59a96">Allarme</div>
<div class="t m1" style="left:375.20px;top:106.54px;font-size:11.6px;line-height:11.6px;color:#333333">16</div>
<div class="t m1" style="left:465.60px;top:106.54px;font-size:11.6px;line-height:11.6px;color:#333333">-</div>
<div class="t m1" style="left:564.40px;top:106.54px;font-size:11.6px;line-height:11.6px;color:#333333">06/10/2025 09:36:30</div>
<div class="t m1" style="left:695.00px;top:106.54px;font-size:11.6px;line-height:11.6px;color:#333333">06/10/2025 09:39:39</div>
<div class="t m1" style="left:825.30px;top:106.54px;font-size:11.6px;line-height:11.6px;color:#333333">No</div>
<div class="t m1" style="left:985.50px;top:106.54px;font-size:11.6px;line-height:11.6px;color:#333333">-</div>
<div class="t m1" style="left:1115.50px;top:106.54px;font-size:11.6px;line-height:11.6px;color:#333333">-</div>
<div class="t m1" style="left:1213.90px;top:106.54px;font-size:11.6px;line-height:11.6px;color:#333333">-</div>
<div class="t m1" style="left:1314.00px;top:106.54px;font-size:11.6px;line-height:11.6px;color:#333333">-</div>
<div class="r" style="left:0;top:160.27px;width:1527px;height:1px;background:#eceef1"></div>
<div class="t m1" style="left:132.30px;top:138.57px;font-size:11.6px;line-height:11.6px;color:#333333">Tecnor - Centro di lavoro 3</div>
<svg class="r" style="left:290.20px;top:135.14px" width="19.4" height="19.4" viewBox="0 0 24 24"><g fill="#f8877d"><path d="M6,6.9L3.87,4.78L5.28,3.37L7.4,5.5L6,6.9M13,1V4H11V1H13M20.13,4.78L18,6.9L16.6,5.5L18.72,3.37L20.13,4.78M4.5,10.5V12.5H1.5V10.5H4.5M19.5,10.5H22.5V12.5H19.5V10.5M6,20H18A2,2 0 0,1 20,22H4A2,2 0 0,1 6,20M12,5A6,6 0 0,1 18,11V19H6V11A6,6 0 0,1 12,5Z"/></g></svg>
<div class="t m1" style="left:316.10px;top:138.57px;font-size:11.6px;line-height:11.6px;color:#f59a96">Allarme</div>
<div class="t m1" style="left:375.20px;top:138.57px;font-size:11.6px;line-height:11.6px;color:#333333">32768</div>
<div class="t m1" style="left:465.60px;top:138.57px;font-size:11.6px;line-height:11.6px;color:#333333">-</div>
<div class="t m1" style="left:564.40px;top:138.57px;font-size:11.6px;line-height:11.6px;color:#333333">06/10/2025 09:24:32</div>
<div class="t m1" style="left:695.00px;top:138.57px;font-size:11.6px;line-height:11.6px;color:#333333"></div>
<div class="t m1" style="left:825.30px;top:138.57px;font-size:11.6px;line-height:11.6px;color:#333333">No</div>
<div class="t m1" style="left:985.50px;top:138.57px;font-size:11.6px;line-height:11.6px;color:#333333">C251153</div>
<div class="t m1" style="left:1115.50px;top:138.57px;font-size:11.6px;line-height:11.6px;color:#333333">O-1685</div>
<div class="t m1" style="left:1213.90px;top:138.57px;font-size:11.6px;line-height:11.6px;color:#333333">GHIBSON</div>
<div class="t m1" style="left:1314.00px;top:138.57px;font-size:11.6px;line-height:11.6px;color:#333333">TDG0502210016AA - SM Disco DN050</div>
<div class="r" style="left:0;top:192.31px;width:1527px;height:1px;background:#eceef1"></div>
<div class="t m1" style="left:132.30px;top:170.61px;font-size:11.6px;line-height:11.6px;color:#333333">Tecnor - Centro di lavoro 1</div>
<svg class="r" style="left:290.20px;top:167.17px" width="19.4" height="19.4" viewBox="0 0 24 24"><g fill="#f8877d"><path d="M6,6.9L3.87,4.78L5.28,3.37L7.4,5.5L6,6.9M13,1V4H11V1H13M20.13,4.78L18,6.9L16.6,5.5L18.72,3.37L20.13,4.78M4.5,10.5V12.5H1.5V10.5H4.5M19.5,10.5H22.5V12.5H19.5V10.5M6,20H18A2,2 0 0,1 20,22H4A2,2 0 0,1 6,20M12,5A6,6 0 0,1 18,11V19H6V11A6,6 0 0,1 12,5Z"/></g></svg>
<div class="t m1" style="left:316.10px;top:170.61px;font-size:11.6px;line-height:11.6px;color:#f59a96">Allarme</div>
<div class="t m1" style="left:375.20px;top:170.61px;font-size:11.6px;line-height:11.6px;color:#333333">32768</div>
<div class="t m1" style="left:465.60px;top:170.61px;font-size:11.6px;line-height:11.6px;color:#333333">-</div>
<div class="t m1" style="left:564.40px;top:170.61px;font-size:11.6px;line-height:11.6px;color:#333333">06/10/2025 09:22:38</div>
<div class="t m1" style="left:695.00px;top:170.61px;font-size:11.6px;line-height:11.6px;color:#333333">06/10/2025 09:33:55</div>
<div class="t m1" style="left:825.30px;top:170.61px;font-size:11.6px;line-height:11.6px;color:#333333">No</div>
<div class="t m1" style="left:985.50px;top:170.61px;font-size:11.6px;line-height:11.6px;color:#333333">-</div>
<div class="t m1" style="left:1115.50px;top:170.61px;font-size:11.6px;line-height:11.6px;color:#333333">-</div>
<div class="t m1" style="left:1213.90px;top:170.61px;font-size:11.6px;line-height:11.6px;color:#333333">-</div>
<div class="t m1" style="left:1314.00px;top:170.61px;font-size:11.6px;line-height:11.6px;color:#333333">-</div>
<div class="r" style="left:0;top:224.34px;width:1527px;height:1px;background:#eceef1"></div>
<div class="t m1" style="left:132.30px;top:202.64px;font-size:11.6px;line-height:11.6px;color:#333333">Tecnor - Centro di lavoro 1</div>
<svg class="r" style="left:290.20px;top:199.21px" width="19.4" height="19.4" viewBox="0 0 24 24"><g fill="#f8877d"><path d="M6,6.9L3.87,4.78L5.28,3.37L7.4,5.5L6,6.9M13,1V4H11V1H13M20.13,4.78L18,6.9L16.6,5.5L18.72,3.37L20.13,4.78M4.5,10.5V12.5H1.5V10.5H4.5M19.5,10.5H22.5V12.5H19.5V10.5M6,20H18A2,2 0 0,1 20,22H4A2,2 0 0,1 6,20M12,5A6,6 0 0,1 18,11V19H6V11A6,6 0 0,1 12,5Z"/></g></svg>
<div class="t m1" style="left:316.10px;top:202.64px;font-size:11.6px;line-height:11.6px;color:#f59a96">Allarme</div>
<div class="t m1" style="left:375.20px;top:202.64px;font-size:11.6px;line-height:11.6px;color:#333333">32768</div>
<div class="t m1" style="left:465.60px;top:202.64px;font-size:11.6px;line-height:11.6px;color:#333333">-</div>
<div class="t m1" style="left:564.40px;top:202.64px;font-size:11.6px;line-height:11.6px;color:#333333">06/10/2025 09:19:20</div>
<div class="t m1" style="left:695.00px;top:202.64px;font-size:11.6px;line-height:11.6px;color:#333333">06/10/2025 09:20:20</div>
<div class="t m1" style="left:825.30px;top:202.64px;font-size:11.6px;line-height:11.6px;color:#333333">No</div>
<div class="t m1" style="left:985.50px;top:202.64px;font-size:11.6px;line-height:11.6px;color:#333333">-</div>
<div class="t m1" style="left:1115.50px;top:202.64px;font-size:11.6px;line-height:11.6px;color:#333333">-</div>
<div class="t m1" style="left:1213.90px;top:202.64px;font-size:11.6px;line-height:11.6px;color:#333333">-</div>
<div class="t m1" style="left:1314.00px;top:202.64px;font-size:11.6px;line-height:11.6px;color:#333333">-</div>
<div class="r" style="left:0;top:256.38px;width:1527px;height:1px;background:#eceef1"></div>
<div class="t m1" style="left:132.30px;top:234.68px;font-size:11.6px;line-height:11.6px;color:#333333">Tecnor - Centro di lavoro 1</div>
<svg class="r" style="left:290.20px;top:231.24px" width="19.4" height="19.4" viewBox="0 0 24 24"><g fill="#f8877d"><path d="M6,6.9L3.87,4.78L5.28,3.37L7.4,5.5L6,6.9M13,1V4H11V1H13M20.13,4.78L18,6.9L16.6,5.5L18.72,3.37L20.13,4.78M4.5,10.5V12.5H1.5V10.5H4.5M19.5,10.5H22.5V12.5H19.5V10.5M6,20H18A2,2 0 0,1 20,22H4A2,2 0 0,1 6,20M12,5A6,6 0 0,1 18,11V19H6V11A6,6 0 0,1 12,5Z"/></g></svg>
<div class="t m1" style="left:316.10px;top:234.68px;font-size:11.6px;line-height:11.6px;color:#f59a96">Allarme</div>
<div class="t m1" style="left:375.20px;top:234.68px;font-size:11.6px;line-height:11.6px;color:#333333">32768</div>
<div class="t m1" style="left:465.60px;top:234.68px;font-size:11.6px;line-height:11.6px;color:#333333">-</div>
<div class="t m1" style="left:564.40px;top:234.68px;font-size:11.6px;line-height:11.6px;color:#333333">06/10/2025 09:18:15</div>
<div class="t m1" style="left:695.00px;top:234.68px;font-size:11.6px;line-height:11.6px;color:#333333">06/10/2025 09:18:57</div>
<div class="t m1" style="left:825.30px;top:234.68px;font-size:11.6px;line-height:11.6px;color:#333333">No</div>
<div class="t m1" style="left:985.50px;top:234.68px;font-size:11.6px;line-height:11.6px;color:#333333">-</div>
<div class="t m1" style="left:1115.50px;top:234.68px;font-size:11.6px;line-height:11.6px;color:#333333">-</div>
<div class="t m1" style="left:1213.90px;top:234.68px;font-size:11.6px;line-height:11.6px;color:#333333">-</div>
<div class="t m1" style="left:1314.00px;top:234.68px;font-size:11.6px;line-height:11.6px;color:#333333">-</div>
<div class="r" style="left:0;top:288.41px;width:1527px;height:1px;background:#eceef1"></div>
<div class="t m1" style="left:132.30px;top:266.71px;font-size:11.6px;line-height:11.6px;color:#333333">Tecnor - Centro di lavoro 1</div>
<svg class="r" style="left:290.20px;top:263.28px" width="19.4" height="19.4" viewBox="0 0 24 24"><g fill="#f8877d"><path d="M6,6.9L3.87,4.78L5.28,3.37L7.4,5.5L6,6.9M13,1V4H11V1H13M20.13,4.78L18,6.9L16.6,5.5L18.72,3.37L20.13,4.78M4.5,10.5V12.5H1.5V10.5H4.5M19.5,10.5H22.5V12.5H19.5V10.5M6,20H18A2,2 0 0,1 20,22H4A2,2 0 0,1 6,20M12,5A6,6 0 0,1 18,11V19H6V11A6,6 0 0,1 12,5Z"/></g></svg>
<div class="t m1" style="left:316.10px;top:266.71px;font-size:11.6px;line-height:11.6px;color:#f59a96">Allarme</div>
<div class="t m1" style="left:375.20px;top:266.71px;font-size:11.6px;line-height:11.6px;color:#333333">32784</div>
<div class="t m1" style="left:465.60px;top:266.71px;font-size:11.6px;line-height:11.6px;color:#333333">-</div>
<div class="t m1" style="left:564.40px;top:266.71px;font-size:11.6px;line-height:11.6px;color:#333333">06/10/2025 09:16:06</div>
<div class="t m1" style="left:695.00px;top:266.71px;font-size:11.6px;line-height:11.6px;color:#333333">06/10/2025 09:16:45</div>
<div class="t m1" style="left:825.30px;top:266.71px;font-size:11.6px;line-height:11.6px;color:#333333">No</div>
<div class="t m1" style="left:985.50px;top:266.71px;font-size:11.6px;line-height:11.6px;color:#333333">-</div>
<div class="t m1" style="left:1115.50px;top:266.71px;font-size:11.6px;line-height:11.6px;color:#333333">-</div>
<div class="t m1" style="left:1213.90px;top:266.71px;font-size:11.6px;line-height:11.6px;color:#333333">-</div>
<div class="t m1" style="left:1314.00px;top:266.71px;font-size:11.6px;line-height:11.6px;color:#333333">-</div>
<div class="r" style="left:0;top:320.45px;width:1527px;height:1px;background:#eceef1"></div>
<div class="t m1" style="left:132.30px;top:298.75px;font-size:11.6px;line-height:11.6px;color:#333333">Tecnor - Centro di lavoro 1</div>
<svg class="r" style="left:290.20px;top:295.31px" width="19.4" height="19.4" viewBox="0 0 24 24"><g fill="#f8877d"><path d="M6,6.9L3.87,4.78L5.28,3.37L7.4,5.5L6,6.9M13,1V4H11V1H13M20.13,4.78L18,6.9L16.6,5.5L18.72,3.37L20.13,4.78M4.5,10.5V12.5H1.5V10.5H4.5M19.5,10.5H22.5V12.5H19.5V10.5M6,20H18A2,2 0 0,1 20,22H4A2,2 0 0,1 6,20M12,5A6,6 0 0,1 18,11V19H6V11A6,6 0 0,1 12,5Z"/></g></svg>
<div class="t m1" style="left:316.10px;top:298.75px;font-size:11.6px;line-height:11.6px;color:#f59a96">Allarme</div>
<div class="t m1" style="left:375.20px;top:298.75px;font-size:11.6px;line-height:11.6px;color:#333333">32784</div>
<div class="t m1" style="left:465.60px;top:298.75px;font-size:11.6px;line-height:11.6px;color:#333333">-</div>
<div class="t m1" style="left:564.40px;top:298.75px;font-size:11.6px;line-height:11.6px;color:#333333">06/10/2025 09:13:01</div>
<div class="t m1" style="left:695.00px;top:298.75px;font-size:11.6px;line-height:11.6px;color:#333333">06/10/2025 09:14:17</div>
<div class="t m1" style="left:825.30px;top:298.75px;font-size:11.6px;line-height:11.6px;color:#333333">No</div>
<div class="t m1" style="left:985.50px;top:298.75px;font-size:11.6px;line-height:11.6px;color:#333333">-</div>
<div class="t m1" style="left:1115.50px;top:298.75px;font-size:11.6px;line-height:11.6px;color:#333333">-</div>
<div class="t m1" style="left:1213.90px;top:298.75px;font-size:11.6px;line-height:11.6px;color:#333333">-</div>
<div class="t m1" style="left:1314.00px;top:298.75px;font-size:11.6px;line-height:11.6px;color:#333333">-</div>
<div class="r" style="left:0;top:352.49px;width:1527px;height:1px;background:#eceef1"></div>
<div class="t m1" style="left:132.30px;top:330.78px;font-size:11.6px;line-height:11.6px;color:#333333">Tecnor - Centro di lavoro 1</div>
<svg class="r" style="left:290.20px;top:327.35px" width="19.4" height="19.4" viewBox="0 0 24 24"><g fill="#f8877d"><path d="M6,6.9L3.87,4.78L5.28,3.37L7.4,5.5L6,6.9M13,1V4H11V1H13M20.13,4.78L18,6.9L16.6,5.5L18.72,3.37L20.13,4.78M4.5,10.5V12.5H1.5V10.5H4.5M19.5,10.5H22.5V12.5H19.5V10.5M6,20H18A2,2 0 0,1 20,22H4A2,2 0 0,1 6,20M12,5A6,6 0 0,1 18,11V19H6V11A6,6 0 0,1 12,5Z"/></g></svg>
<div class="t m1" style="left:316.10px;top:330.78px;font-size:11.6px;line-height:11.6px;color:#f59a96">Allarme</div>
<div class="t m1" style="left:375.20px;top:330.78px;font-size:11.6px;line-height:11.6px;color:#333333">16</div>
<div class="t m1" style="left:465.60px;top:330.78px;font-size:11.6px;line-height:11.6px;color:#333333">-</div>
<div class="t m1" style="left:564.40px;top:330.78px;font-size:11.6px;line-height:11.6px;color:#333333">06/10/2025 09:12:41</div>
<div class="t m1" style="left:695.00px;top:330.78px;font-size:11.6px;line-height:11.6px;color:#333333">06/10/2025 09:12:56</div>
<div class="t m1" style="left:825.30px;top:330.78px;font-size:11.6px;line-height:11.6px;color:#333333">No</div>
<div class="t m1" style="left:985.50px;top:330.78px;font-size:11.6px;line-height:11.6px;color:#333333">-</div>
<div class="t m1" style="left:1115.50px;top:330.78px;font-size:11.6px;line-height:11.6px;color:#333333">-</div>
<div class="t m1" style="left:1213.90px;top:330.78px;font-size:11.6px;line-height:11.6px;color:#333333">-</div>
<div class="t m1" style="left:1314.00px;top:330.78px;font-size:11.6px;line-height:11.6px;color:#333333">-</div>
<div class="r" style="left:0;top:384.52px;width:1527px;height:1px;background:#eceef1"></div>
<div class="t m1" style="left:132.30px;top:362.82px;font-size:11.6px;line-height:11.6px;color:#333333">Tecnor - Centro di lavoro 3</div>
<svg class="r" style="left:290.20px;top:359.38px" width="19.4" height="19.4" viewBox="0 0 24 24"><g fill="#f8877d"><path d="M6,6.9L3.87,4.78L5.28,3.37L7.4,5.5L6,6.9M13,1V4H11V1H13M20.13,4.78L18,6.9L16.6,5.5L18.72,3.37L20.13,4.78M4.5,10.5V12.5H1.5V10.5H4.5M19.5,10.5H22.5V12.5H19.5V10.5M6,20H18A2,2 0 0,1 20,22H4A2,2 0 0,1 6,20M12,5A6,6 0 0,1 18,11V19H6V11A6,6 0 0,1 12,5Z"/></g></svg>
<div class="t m1" style="left:316.10px;top:362.82px;font-size:11.6px;line-height:11.6px;color:#f59a96">Allarme</div>
<div class="t m1" style="left:375.20px;top:362.82px;font-size:11.6px;line-height:11.6px;color:#333333">32768</div>
<div class="t m1" style="left:465.60px;top:362.82px;font-size:11.6px;line-height:11.6px;color:#333333">-</div>
<div class="t m1" style="left:564.40px;top:362.82px;font-size:11.6px;line-height:11.6px;color:#333333">06/10/2025 09:00:47</div>
<div class="t m1" style="left:695.00px;top:362.82px;font-size:11.6px;line-height:11.6px;color:#333333">06/10/2025 09:14:17</div>
<div class="t m1" style="left:825.30px;top:362.82px;font-size:11.6px;line-height:11.6px;color:#333333">No</div>
<div class="t m1" style="left:985.50px;top:362.82px;font-size:11.6px;line-height:11.6px;color:#333333">C251153</div>
<div class="t m1" style="left:1115.50px;top:362.82px;font-size:11.6px;line-height:11.6px;color:#333333">O-1685</div>
<div class="t m1" style="left:1213.90px;top:362.82px;font-size:11.6px;line-height:11.6px;color:#333333">GHIBSON</div>
<div class="t m1" style="left:1314.00px;top:362.82px;font-size:11.6px;line-height:11.6px;color:#333333">TDG0502210016AA - SM Disco DN050</div>
<div class="r" style="left:0;top:416.55px;width:1527px;height:1px;background:#eceef1"></div>
<div class="t m1" style="left:132.30px;top:394.85px;font-size:11.6px;line-height:11.6px;color:#333333">Tecnor - Centro di lavoro 3</div>
<svg class="r" style="left:290.20px;top:391.42px" width="19.4" height="19.4" viewBox="0 0 24 24"><g fill="#f8877d"><path d="M6,6.9L3.87,4.78L5.28,3.37L7.4,5.5L6,6.9M13,1V4H11V1H13M20.13,4.78L18,6.9L16.6,5.5L18.72,3.37L20.13,4.78M4.5,10.5V12.5H1.5V10.5H4.5M19.5,10.5H22.5V12.5H19.5V10.5M6,20H18A2,2 0 0,1 20,22H4A2,2 0 0,1 6,20M12,5A6,6 0 0,1 18,11V19H6V11A6,6 0 0,1 12,5Z"/></g></svg>
<div class="t m1" style="left:316.10px;top:394.85px;font-size:11.6px;line-height:11.6px;color:#f59a96">Allarme</div>
<div class="t m1" style="left:375.20px;top:394.85px;font-size:11.6px;line-height:11.6px;color:#333333">32768</div>
<div class="t m1" style="left:465.60px;top:394.85px;font-size:11.6px;line-height:11.6px;color:#333333">-</div>
<div class="t m1" style="left:564.40px;top:394.85px;font-size:11.6px;line-height:11.6px;color:#333333">06/10/2025 08:47:28</div>
<div class="t m1" style="left:695.00px;top:394.85px;font-size:11.6px;line-height:11.6px;color:#333333">06/10/2025 08:50:24</div>
<div class="t m1" style="left:825.30px;top:394.85px;font-size:11.6px;line-height:11.6px;color:#333333">No</div>
<div class="t m1" style="left:985.50px;top:394.85px;font-size:11.6px;line-height:11.6px;color:#333333">C251153</div>
<div class="t m1" style="left:1115.50px;top:394.85px;font-size:11.6px;line-height:11.6px;color:#333333">O-1685</div>
<div class="t m1" style="left:1213.90px;top:394.85px;font-size:11.6px;line-height:11.6px;color:#333333">GHIBSON</div>
<div class="t m1" style="left:1314.00px;top:394.85px;font-size:11.6px;line-height:11.6px;color:#333333">TDG0502210016AA - SM Disco DN050</div>
<div class="r" style="left:0;top:448.59px;width:1527px;height:1px;background:#eceef1"></div>
<div class="t m1" style="left:132.30px;top:426.89px;font-size:11.6px;line-height:11.6px;color:#333333">Tecnor - Centro di lavoro 1</div>
<svg class="r" style="left:290.20px;top:423.45px" width="19.4" height="19.4" viewBox="0 0 24 24"><g fill="#f8877d"><path d="M6,6.9L3.87,4.78L5.28,3.37L7.4,5.5L6,6.9M13,1V4H11V1H13M20.13,4.78L18,6.9L16.6,5.5L18.72,3.37L20.13,4.78M4.5,10.5V12.5H1.5V10.5H4.5M19.5,10.5H22.5V12.5H19.5V10.5M6,20H18A2,2 0 0,1 20,22H4A2,2 0 0,1 6,20M12,5A6,6 0 0,1 18,11V19H6V11A6,6 0 0,1 12,5Z"/></g></svg>
<div class="t m1" style="left:316.10px;top:426.89px;font-size:11.6px;line-height:11.6px;color:#f59a96">Allarme</div>
<div class="t m1" style="left:375.20px;top:426.89px;font-size:11.6px;line-height:11.6px;color:#333333">16</div>
<div class="t m1" style="left:465.60px;top:426.89px;font-size:11.6px;line-height:11.6px;color:#333333">-</div>
<div class="t m1" style="left:564.40px;top:426.89px;font-size:11.6px;line-height:11.6px;color:#333333">06/10/2025 08:42:44</div>
<div class="t m1" style="left:695.00px;top:426.89px;font-size:11.6px;line-height:11.6px;color:#333333">06/10/2025 08:45:12</div>
<div class="t m1" style="left:825.30px;top:426.89px;font-size:11.6px;line-height:11.6px;color:#333333">No</div>
<div class="t m1" style="left:985.50px;top:426.89px;font-size:11.6px;line-height:11.6px;color:#333333">-</div>
<div class="t m1" style="left:1115.50px;top:426.89px;font-size:11.6px;line-height:11.6px;color:#333333">-</div>
<div class="t m1" style="left:1213.90px;top:426.89px;font-size:11.6px;line-height:11.6px;color:#333333">-</div>
<div class="t m1" style="left:1314.00px;top:426.89px;font-size:11.6px;line-height:11.6px;color:#333333">-</div>
<div class="r" style="left:0;top:480.62px;width:1527px;height:1px;background:#eceef1"></div>
<div class="t m1" style="left:132.30px;top:458.92px;font-size:11.6px;line-height:11.6px;color:#333333">Tecnor - Centro di lavoro 1</div>
<svg class="r" style="left:290.20px;top:455.49px" width="19.4" height="19.4" viewBox="0 0 24 24"><g fill="#f8877d"><path d="M6,6.9L3.87,4.78L5.28,3.37L7.4,5.5L6,6.9M13,1V4H11V1H13M20.13,4.78L18,6.9L16.6,5.5L18.72,3.37L20.13,4.78M4.5,10.5V12.5H1.5V10.5H4.5M19.5,10.5H22.5V12.5H19.5V10.5M6,20H18A2,2 0 0,1 20,22H4A2,2 0 0,1 6,20M12,5A6,6 0 0,1 18,11V19H6V11A6,6 0 0,1 12,5Z"/></g></svg>
<div class="t m1" style="left:316.10px;top:458.92px;font-size:11.6px;line-height:11.6px;color:#f59a96">Allarme</div>
<div class="t m1" style="left:375.20px;top:458.92px;font-size:11.6px;line-height:11.6px;color:#333333">16</div>
<div class="t m1" style="left:465.60px;top:458.92px;font-size:11.6px;line-height:11.6px;color:#333333">-</div>
<div class="t m1" style="left:564.40px;top:458.92px;font-size:11.6px;line-height:11.6px;color:#333333">06/10/2025 08:39:44</div>
<div class="t m1" style="left:695.00px;top:458.92px;font-size:11.6px;line-height:11.6px;color:#333333">06/10/2025 08:41:44</div>
<div class="t m1" style="left:825.30px;top:458.92px;font-size:11.6px;line-height:11.6px;color:#333333">No</div>
<div class="t m1" style="left:985.50px;top:458.92px;font-size:11.6px;line-height:11.6px;color:#333333">-</div>
<div class="t m1" style="left:1115.50px;top:458.92px;font-size:11.6px;line-height:11.6px;color:#333333">-</div>
<div class="t m1" style="left:1213.90px;top:458.92px;font-size:11.6px;line-height:11.6px;color:#333333">-</div>
<div class="t m1" style="left:1314.00px;top:458.92px;font-size:11.6px;line-height:11.6px;color:#333333">-</div>
<div class="t m1" style="left:132.30px;top:490.96px;font-size:11.6px;line-height:11.6px;color:#333333">Tecnor - Centro di lavoro 3</div>
<svg class="r" style="left:290.20px;top:487.52px" width="19.4" height="19.4" viewBox="0 0 24 24"><g fill="#f8877d"><path d="M6,6.9L3.87,4.78L5.28,3.37L7.4,5.5L6,6.9M13,1V4H11V1H13M20.13,4.78L18,6.9L16.6,5.5L18.72,3.37L20.13,4.78M4.5,10.5V12.5H1.5V10.5H4.5M19.5,10.5H22.5V12.5H19.5V10.5M6,20H18A2,2 0 0,1 20,22H4A2,2 0 0,1 6,20M12,5A6,6 0 0,1 18,11V19H6V11A6,6 0 0,1 12,5Z"/></g></svg>
<div class="t m1" style="left:316.10px;top:490.96px;font-size:11.6px;line-height:11.6px;color:#f59a96">Allarme</div>
<div class="t m1" style="left:375.20px;top:490.96px;font-size:11.6px;line-height:11.6px;color:#333333">32768</div>
<div class="t m1" style="left:465.60px;top:490.96px;font-size:11.6px;line-height:11.6px;color:#333333">-</div>
<div class="t m1" style="left:564.40px;top:490.96px;font-size:11.6px;line-height:11.6px;color:#333333">06/10/2025 08:35:10</div>
<div class="t m1" style="left:695.00px;top:490.96px;font-size:11.6px;line-height:11.6px;color:#333333">06/10/2025 08:36:59</div>
<div class="t m1" style="left:825.30px;top:490.96px;font-size:11.6px;line-height:11.6px;color:#333333">No</div>
<div class="t m1" style="left:985.50px;top:490.96px;font-size:11.6px;line-height:11.6px;color:#333333">C251153</div>
<div class="t m1" style="left:1115.50px;top:490.96px;font-size:11.6px;line-height:11.6px;color:#333333">O-1685</div>
<div class="t m1" style="left:1213.90px;top:490.96px;font-size:11.6px;line-height:11.6px;color:#333333">GHIBSON</div>
<div class="t m1" style="left:1314.00px;top:490.96px;font-size:11.6px;line-height:11.6px;color:#333333">TDG0502210016AA - SM Disco DN050</div>
</div>
<div class="r" style="left:214px;top:769px;width:1544px;height:1px;background:#e8eaee"></div>
<div class="t m1" style="left:233.20px;top:787.11px;font-size:11.45px;line-height:11.45px;color:#444;">Mostrati da 1 a 25 di 9,196 risultati</div>
<div class="r" style="left:922px;top:778px;width:129px;height:30px;background:#fff;border:1px solid #e6e7ea;border-radius:7px;box-sizing:border-box"></div>
<div class="r" style="left:996px;top:779px;width:1px;height:28px;background:#e6e7ea"></div>
<div class="t m1" style="left:932.30px;top:787.05px;font-size:11.4px;line-height:11.4px;color:#8a8a8a;">per pagina</div>
<div class="t m1" style="left:1006.60px;top:787.35px;font-size:11.4px;line-height:11.4px;color:#222;">25</div>
<svg class="r" style="left:1032px;top:790px;" width="9" height="6" viewBox="0 0 9 6"><path d="M1 1 L4.5 4.5 L8 1" fill="none" stroke="#555" stroke-width="1.3"/></svg>
<div class="r" style="left:1469px;top:778px;width:272px;height:29px;background:#fff;border:1px solid #e6e7ea;border-radius:7px;box-sizing:border-box;overflow:hidden"></div>
<div class="r" style="left:1470px;top:779px;width:27px;height:27px;background:#f6f6f7;border-top-left-radius:6px;border-bottom-left-radius:6px"></div>
<div class="r" style="left:1497px;top:779px;width:1px;height:27px;background:#e6e7ea"></div>
<div class="r" style="left:1527px;top:779px;width:1px;height:27px;background:#e6e7ea"></div>
<div class="r" style="left:1558px;top:779px;width:1px;height:27px;background:#e6e7ea"></div>
<div class="r" style="left:1588px;top:779px;width:1px;height:27px;background:#e6e7ea"></div>
<div class="r" style="left:1623px;top:779px;width:1px;height:27px;background:#e6e7ea"></div>
<div class="r" style="left:1667px;top:779px;width:1px;height:27px;background:#e6e7ea"></div>
<div class="r" style="left:1711px;top:779px;width:1px;height:27px;background:#e6e7ea"></div>
<div class="t" style="left:1453.05px;top:787.21px;width:60px;text-align:center;font-size:11.8px;line-height:11.8px;color:#2a2a2a;-webkit-text-stroke:0.12px">1</div>
<div class="t" style="left:1482.05px;top:787.21px;width:60px;text-align:center;font-size:11.8px;line-height:11.8px;color:#2a2a2a;-webkit-text-stroke:0.12px">2</div>
<div class="t" style="left:1512.45px;top:787.21px;width:60px;text-align:center;font-size:11.8px;line-height:11.8px;color:#2a2a2a;-webkit-text-stroke:0.12px">3</div>
<div class="t" style="left:1542.85px;top:787.21px;width:60px;text-align:center;font-size:11.8px;line-height:11.8px;color:#2a2a2a;-webkit-text-stroke:0.12px">4</div>
<div class="t" style="left:1575.75px;top:787.21px;width:60px;text-align:center;font-size:11.8px;line-height:11.8px;color:#2a2a2a;-webkit-text-stroke:0.12px">...</div>
<div class="t" style="left:1615.10px;top:787.21px;width:60px;text-align:center;font-size:11.8px;line-height:11.8px;color:#2a2a2a;-webkit-text-stroke:0.12px">367</div>
<div class="t" style="left:1658.90px;top:787.21px;width:60px;text-align:center;font-size:11.8px;line-height:11.8px;color:#2a2a2a;-webkit-text-stroke:0.12px">368</div>
<svg class="r" style="left:1723.6px;top:788.2px;" width="7" height="9" viewBox="0 0 7 9"><path d="M1.3 1 L5 4.5 L1.3 8" fill="none" stroke="#9a9a9a" stroke-width="1.2"/></svg>
</body></html>
